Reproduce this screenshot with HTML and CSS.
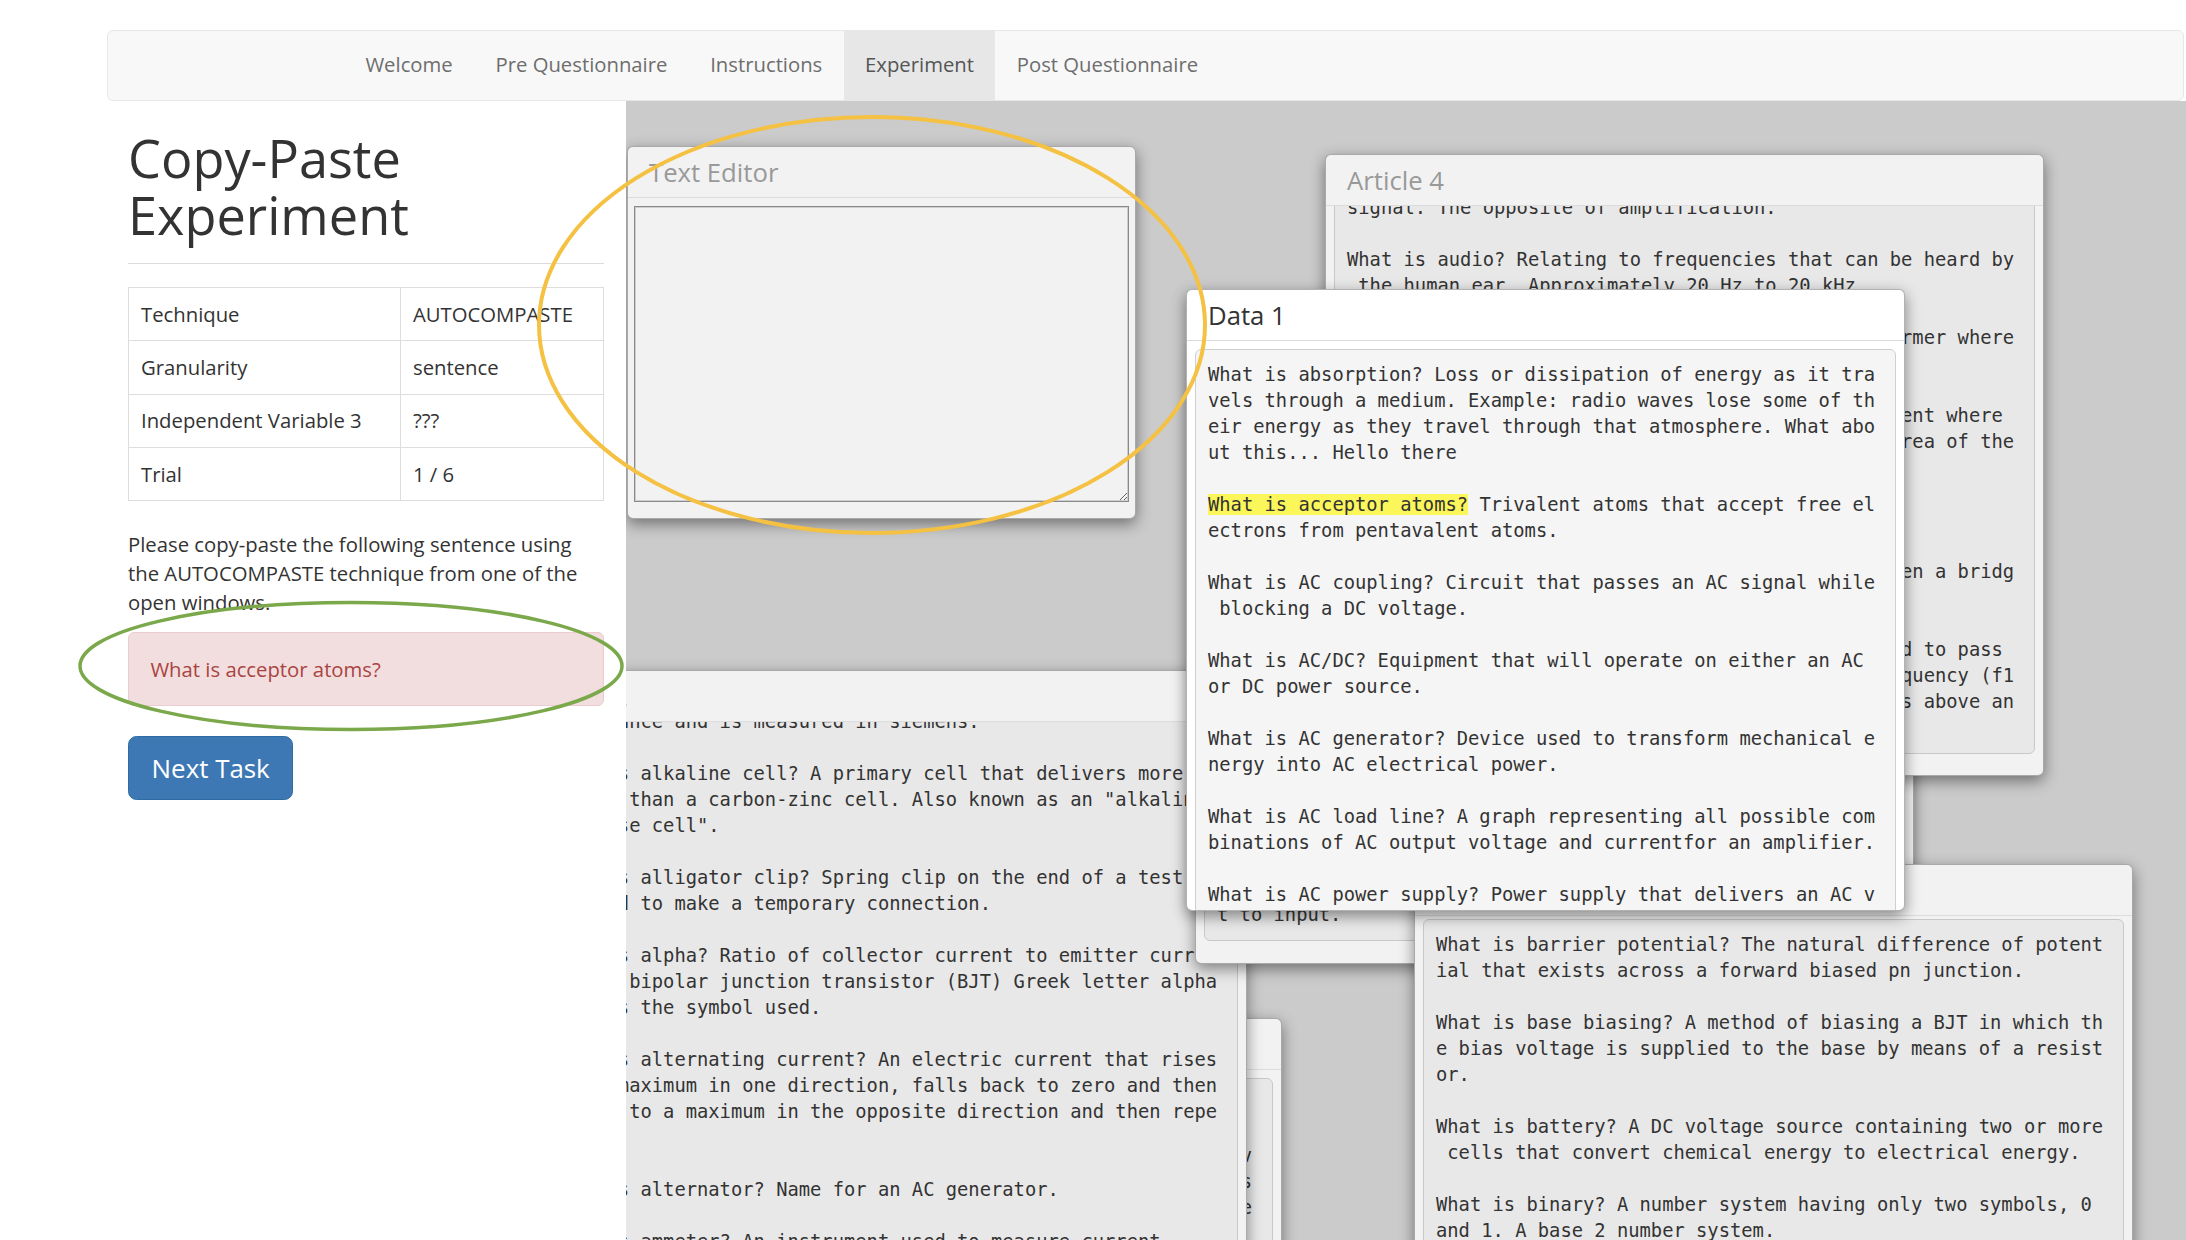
FILE: index.html
```html
<!DOCTYPE html>
<html lang="en">
<head>
<meta charset="utf-8">
<title>Copy-Paste Experiment</title>
<link rel="stylesheet" href="styles.css">
</head>
<body>
<nav class="navbar">
  <ul class="nav">
    <li><a href="#">Welcome</a></li>
    <li><a href="#">Pre Questionnaire</a></li>
    <li><a href="#">Instructions</a></li>
    <li class="active"><a href="#">Experiment</a></li>
    <li><a href="#">Post Questionnaire</a></li>
  </ul>
</nav>
<div class="main">
  <aside class="side">
    <h1 class="title">Copy-Paste<br>Experiment</h1>
    <hr class="rule">
    <table class="info">
      <tr><td class="c1">Technique</td><td>AUTOCOMPASTE</td></tr>
      <tr><td class="c1">Granularity</td><td>sentence</td></tr>
      <tr><td class="c1">Independent Variable 3</td><td>???</td></tr>
      <tr><td class="c1">Trial</td><td>1 / 6</td></tr>
    </table>
    <p class="prompt">Please copy-paste the following sentence using the AUTOCOMPASTE technique from one of the open windows.</p>
    <div class="alert">What is acceptor atoms?</div>
    <button class="btn" type="button">Next Task</button>
  </aside>
  <section class="desk">
    <div class="win w6">
      <div class="win-head"><h4 class="win-title">Article 1</h4></div>
      <div class="win-body"><pre class="pre">What is AM? Amplitude modulation.

What is amplitude? Peak value of a varying signal as it mov
es above and below its zero reference level, in volts, amps
 or watts; it represents the greatest height of a sine wave
form.</pre></div>
    </div>
    <div class="win w3">
      <div class="win-head"><h4 class="win-title">Data 2</h4></div>
      <div class="win-body"><pre class="pre pre-w3"> impedance and is measured in siemens.

What is alkaline cell? A primary cell that delivers more c
urrent than a carbon-zinc cell. Also known as an "alkaline-m
anganese cell".

What is alligator clip? Spring clip on the end of a test cl
ip lead to make a temporary connection.

What is alpha? Ratio of collector current to emitter curre
nt for bipolar junction transistor (BJT) Greek letter alpha
 (α) is the symbol used.

What is alternating current? An electric current that rises
 to a maximum in one direction, falls back to zero and then
 rises to a maximum in the opposite direction and then repe
ats.

What is alternator? Name for an AC generator.

What is ammeter? An instrument used to measure current.</pre></div>
    </div>
    <div class="win w4">
      <div class="win-head"><h4 class="win-title">Data 3</h4></div>
      <div class="win-body win-body-end"><pre class="pre">What is AC coupling? Circuit that passes an AC signal while
 blocking a DC voltage.

What is AC/DC? Equipment that will operate on either an AC
or DC power source.

What is AC generator? Device used to transform mechanical e
nergy into AC electrical power.

What is AC load line? A graph representing all possible com
binations of AC output voltage and currentfor an amplifier.

What is AC power supply? Power supply that delivers an AC v
oltage output with a frequency and shape that are equivalen
t to input.</pre></div>
    </div>
    <div class="win w-a4">
      <div class="win-head"><h4 class="win-title">Article 4</h4></div>
      <div class="win-body"><pre class="pre pre-a4">signal. The opposite of amplification.

What is audio? Relating to frequencies that can be heard by
 the human ear. Approximately 20 Hz to 20 kHz.

What is autotransformer? A single-winding transformer where
 part of the winding is common to both circuits.

What is avalanche? A sudden surge in reverse current where
 depletion region breaks down over a very small area of the
 junction.

What is B? Symbol for magnetic flux density.

What is bridge balance? The state that results when a bridg
e's output voltage is zero.

What is band-pass filter? A tuned circuit designed to pass
 a band of frequencies between a lower cutoff frequency (f1
) and the upper cutoff frequency (f2). Frequencies above an
d below are attenuated.</pre></div>
    </div>
    <div class="win w5">
      <div class="win-head"><h4 class="win-title">Article 2</h4></div>
      <div class="win-body"><pre class="pre pre-w5">What is barrier potential? The natural difference of potent
ial that exists across a forward biased pn junction.

What is base biasing? A method of biasing a BJT in which th
e bias voltage is supplied to the base by means of a resist
or.

What is battery? A DC voltage source containing two or more
 cells that convert chemical energy to electrical energy.

What is binary? A number system having only two symbols, 0
and 1. A base 2 number system.

What is bipolar? Having two opposite charges or polarities.</pre></div>
    </div>
    <div class="win win-active w-d1">
      <div class="win-head"><h4 class="win-title">Data 1</h4></div>
      <div class="win-body"><pre class="pre">What is absorption? Loss or dissipation of energy as it tra
vels through a medium. Example: radio waves lose some of th
eir energy as they travel through that atmosphere. What abo
ut this... Hello there

<mark class="hl">What is acceptor atoms?</mark> Trivalent atoms that accept free el
ectrons from pentavalent atoms.

What is AC coupling? Circuit that passes an AC signal while
 blocking a DC voltage.

What is AC/DC? Equipment that will operate on either an AC
or DC power source.

What is AC generator? Device used to transform mechanical e
nergy into AC electrical power.

What is AC load line? A graph representing all possible com
binations of AC output voltage and currentfor an amplifier.

What is AC power supply? Power supply that delivers an AC v
oltage output.</pre></div>
    </div>
    <div class="win w-te">
      <div class="win-head"><h4 class="win-title">Text Editor</h4></div>
      <div class="win-body te-body"><textarea class="editor"></textarea></div>
    </div>
  </section>
</div>
<svg class="annot" width="2186" height="1240" viewBox="0 0 2186 1240" aria-hidden="true">
  <ellipse cx="351" cy="666" rx="271" ry="63.5" fill="none" stroke="#7aa84a" stroke-width="3.5"/>
  <ellipse cx="872" cy="325" rx="333" ry="208" fill="none" stroke="#f5c143" stroke-width="4"/>
</svg>
</body>
</html>
```
FILE: styles.css
```css
html, body {
  margin: 0;
  padding: 0;
}
body {
  width: 2186px;
  height: 1240px;
  overflow: hidden;
  position: relative;
  background: #fff;
  color: #333;
  font-family: "Open Sans", "Noto Sans", sans-serif;
  font-size: 20.3px;
}

/* ---------- navbar ---------- */
.navbar {
  margin: 30px 0 0 107px;
  width: 2077px;
  height: 71px;
  box-sizing: border-box;
  background: #f8f8f8;
  border: 1px solid #e7e7e7;
  border-radius: 6px;
}
.nav {
  list-style: none;
  margin: 0;
  padding: 0 0 0 236px;
  display: flex;
  height: 100%;
}
.nav a {
  display: block;
  padding: 0 21.4px 2px;
  line-height: 67px;
  font-size: 20.3px;
  color: #6e6e6e;
  text-decoration: none;
}
.nav .active a {
  background: #e7e7e7;
  color: #555;
}

/* ---------- layout ---------- */
.main {
  display: flex;
  height: 1139px;
}
.side {
  flex: none;
  width: 626px;
  box-sizing: border-box;
  padding: 0 22px 0 128px;
}
.desk {
  flex: 1;
  position: relative;
  overflow: hidden;
  background: #cbcbcb;
}

/* ---------- side panel ---------- */
.title {
  margin: 29px 0 0;
  font-size: 52.3px;
  line-height: 56.6px;
  font-weight: 400;
  color: #333;
}
.rule {
  margin: 20px 0 0;
  border: 0;
  border-top: 1.5px solid #dcdcdc;
}
.info {
  margin-top: 23px;
  width: 100%;
  border-collapse: collapse;
}
.info td {
  border: 1px solid #ddd;
  padding: 11.8px 11px 11.8px 12px;
  line-height: 28.6px;
  font-size: 20.3px;
  vertical-align: middle;
}
.info .c1 {
  width: 248px;
}
.prompt {
  margin: 29.5px 0 16px;
  font-size: 20.3px;
  line-height: 28.6px;
}
.alert {
  padding: 21.4px;
  border: 1px solid #ebccd1;
  border-radius: 6px;
  background: #f2dede;
  color: #a94442;
  font-size: 20.3px;
  line-height: 28.6px;
  margin-bottom: 30px;
}
.btn {
  font-family: "Open Sans", "Noto Sans", sans-serif;
  font-size: 25.9px;
  line-height: 34.3px;
  padding: 14.3px 22.6px;
  color: #fff;
  background: #3d78b4;
  border: 1px solid #2e6da4;
  border-radius: 8.6px;
  cursor: pointer;
}

/* ---------- windows ---------- */
.win {
  position: absolute;
  width: 719px;
  box-sizing: border-box;
  border: 1px solid rgba(0, 0, 0, 0.3);
  border-radius: 6px;
  background: #f2f2f2;
  box-shadow: 0 5px 15px rgba(0, 0, 0, 0.45);
  display: flex;
  flex-direction: column;
  overflow: hidden;
}
.win-head {
  flex: none;
  height: 50px;
  padding: 0 21px;
  border-bottom: 1px solid #dcdcdc;
  display: flex;
  align-items: center;
}
.win-title {
  margin: 0;
  font-size: 25.7px;
  font-weight: 400;
  color: #999;
  white-space: nowrap;
}
.win-active {
  background: #fff;
}
.win-active .win-title {
  color: #333;
}
.win-body {
  flex: 1;
  min-height: 0;
  padding: 8px;
  overflow: hidden;
}
.win-body-end {
  display: flex;
  flex-direction: column;
  justify-content: flex-end;
}
.pre {
  flex: none;
  margin: 0 0 14px;
  padding: 12px;
  border: 1px solid #c8c8c8;
  border-radius: 6px;
  background: #e8e8e8;
  color: #333;
  font-family: "DejaVu Sans Mono", "Liberation Mono", monospace;
  font-size: 18.8px;
  line-height: 26px;
  white-space: pre;
  overflow: hidden;
}
.win-active .pre {
  background: #f5f5f5;
  border-color: #cfcfcf;
}
.hl {
  background: #fbf65a;
  color: #333;
}
.pre-a4 { margin-top: -32px; }
.pre-w3 { margin-top: -34px; }
.pre-w5 { margin-top: -5px; }

/* window placement on the desktop canvas */
.w6   { left: -63px; top: 917px; height: 400px; z-index: 1; }
.w3   { left: -98px; top: 569px; height: 700px; z-index: 2; }
.w4   { left: 569px; top: 241px; height: 622px; z-index: 3; }
.w-a4 { left: 699px; top: 53px;  height: 622px; z-index: 4; }
.w5   { left: 788px; top: 763px; height: 600px; z-index: 5; }
.w-d1 { left: 560px; top: 188px; height: 622px; z-index: 6; }
.w-te { left: 1px;   top: 45px;  width: 509px; height: 373px; z-index: 7; }

.te-body {
  padding: 8px 6px 15px;
}
.editor {
  display: block;
  width: 100%;
  height: 296px;
  box-sizing: border-box;
  margin: 0;
  background: #f2f2f2;
  border: 1px solid #8a8a8a;
  box-shadow: inset 0 0 0 1px #cdcdcd;
  border-radius: 0;
  resize: both;
  font-family: "DejaVu Sans Mono", monospace;
}

/* ---------- annotations ---------- */
.annot {
  position: absolute;
  left: 0;
  top: 0;
  pointer-events: none;
  z-index: 20;
}
```
